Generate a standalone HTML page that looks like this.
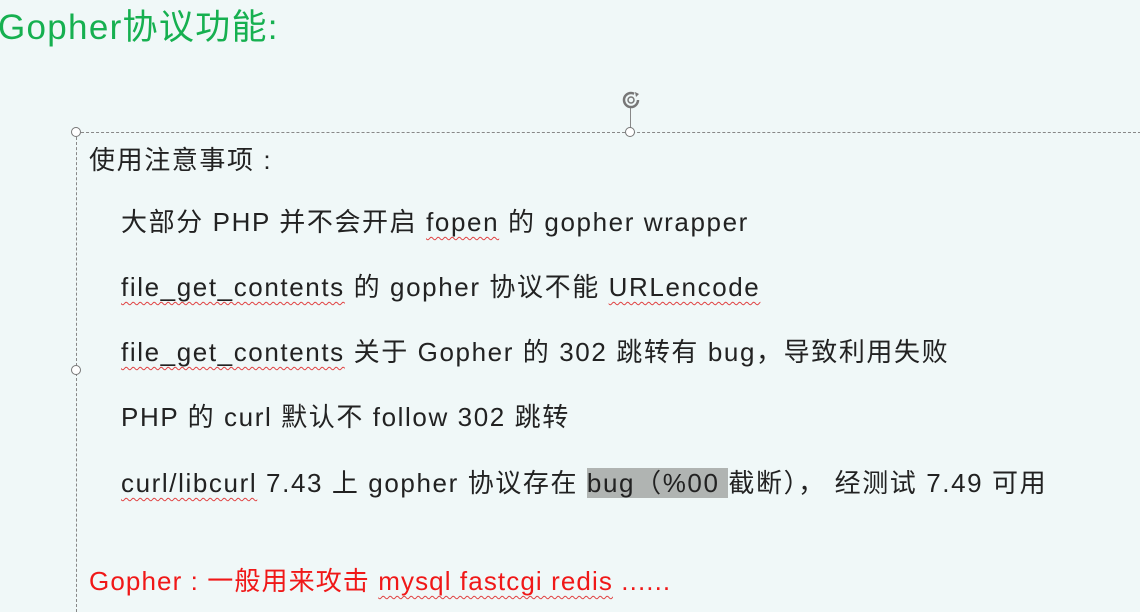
<!DOCTYPE html>
<html><head><meta charset="utf-8"><style>
body{margin:0;width:1140px;height:603px;background:#f0f8f8;overflow:hidden;position:relative;font-family:"Liberation Sans","Noto Sans CJK SC",sans-serif;}
.t{position:absolute;white-space:nowrap;color:#222;font-size:26px;letter-spacing:1.6px;line-height:30px;}
.sq{text-decoration:underline wavy #e04040;text-decoration-thickness:1px;text-underline-offset:5px;}
.h{position:absolute;width:8px;height:8px;border:1px solid #777;border-radius:50%;background:#fff;}
</style></head><body>
<div class="t" style="left:-2px;top:8px;font-size:35px;letter-spacing:1.3px;line-height:40px;color:#16b050;">Gopher协议功能:</div>
<div style="position:absolute;left:76px;top:132px;width:1070px;height:0;border-top:1px dashed #888;"></div>
<div style="position:absolute;left:76px;top:132px;width:0;height:480px;border-left:1px dashed #888;"></div>
<div style="position:absolute;left:630px;top:108px;width:1px;height:24px;background:#888;"></div>
<div class="h" style="left:71px;top:127px"></div>
<div class="h" style="left:625px;top:127px"></div>
<div class="h" style="left:71px;top:365px"></div>
<svg style="position:absolute;left:620px;top:89px" width="22" height="22" viewBox="0 0 22 22"><circle cx="11" cy="11" r="7" fill="none" stroke="#777" stroke-width="2.5" stroke-dasharray="36 8"/><circle cx="11" cy="11" r="3" fill="none" stroke="#777" stroke-width="1.5"/><path d="M15 3l4 2-3 3z" fill="#777"/></svg>
<div class="t" style="left:89px;top:145px">使用注意事项 :</div>
<div class="t" style="left:121px;top:207px">大部分 PHP 并不会开启 <span class="sq">fopen</span> 的 gopher wrapper</div>
<div class="t" style="left:121px;top:272px"><span class="sq">file_get_contents</span> 的 gopher 协议不能 <span class="sq">URLencode</span></div>
<div class="t" style="left:121px;top:337px"><span class="sq">file_get_contents</span> 关于 Gopher 的 302 跳转有 bug，导致利用失败</div>
<div class="t" style="left:121px;top:402px">PHP 的 curl 默认不 follow 302 跳转</div>
<div class="t" style="left:121px;top:468px"><span class="sq">curl/libcurl</span> 7.43 上 gopher 协议存在 <span style="background:#b0b4b2;">bug（%00 </span>截断）， 经测试 7.49 可用</div>
<div class="t" style="left:89px;top:566px;color:#f01818;letter-spacing:1.1px;">Gopher : 一般用来攻击 <span class="sq">mysql fastcgi redis</span> ......</div>
</body></html>
